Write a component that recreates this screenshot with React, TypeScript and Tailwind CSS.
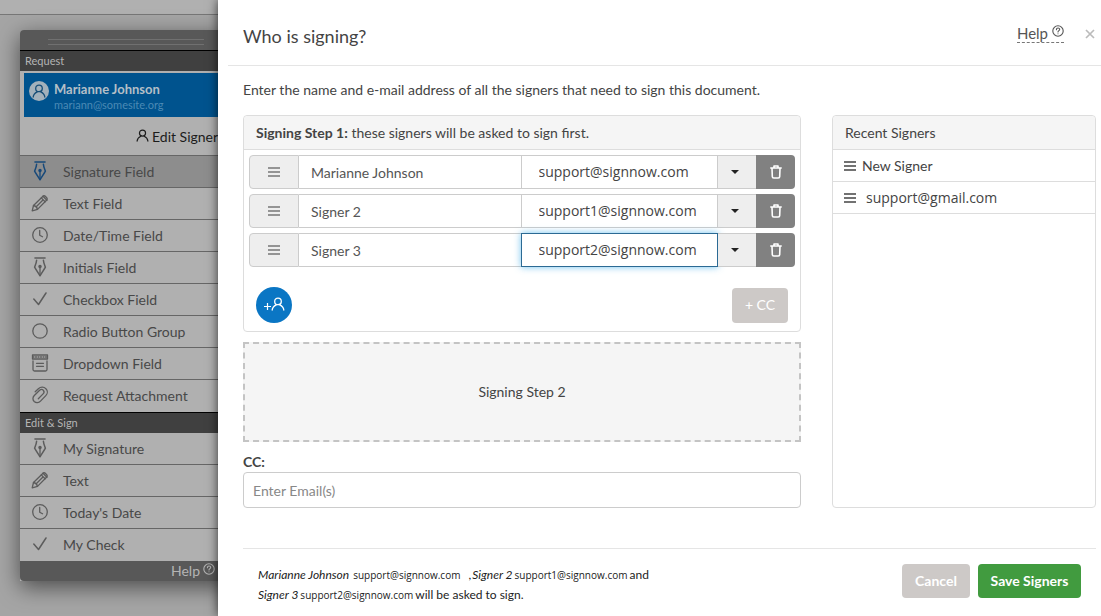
import React from "react";

type IconProps = { className?: string };

const stroke = {
  fill: "none",
  stroke: "currentColor",
  strokeWidth: 1.3,
  strokeLinecap: "round" as const,
  strokeLinejoin: "round" as const,
};

const PenIcon = ({ className = "" }: IconProps) => (
  <svg viewBox="0 0 18 20" className={`h-5 w-[18px] ${className}`} {...stroke} aria-hidden="true">
    <path d="M4 1h10" strokeWidth="1.600" />
    <path d="M5.600 3.200C5.400 5.800 4.400 8 3.600 10.200c1.300 2.400 3.200 5.200 5.400 8.600 2.200-3.400 4.100-6.200 5.400-8.600-.8-2.200-1.800-4.400-2-7" strokeWidth="1.500" />
    <path d="M9 10.500V18" />
    <circle cx="9" cy="9.500" r="1.100" fill="currentColor" />
  </svg>
);

const PencilIcon = () => (
  <svg viewBox="0 0 18 18" className="size-[18px]" {...stroke} aria-hidden="true">
    <path d="M1.200 16.800l1.300-5.300L12 2.200c1.500-1.500 5.300 2.200 3.800 3.800l-9.300 9.400z" />
    <path d="M2.500 11.500c1.700.2 3.500 2 4 3.900M10.300 3.900l3.800 3.900M12 2.300l3.900 3.900M11.700 6.300L5 13" />
  </svg>
);

const ClockIcon = () => (
  <svg viewBox="0 0 18 18" className="size-[18px]" {...stroke} aria-hidden="true">
    <circle cx="9" cy="9" r="7.300" />
    <path d="M8.700 4.500V9.200l2.800 1.600" />
  </svg>
);

const CheckIcon = () => (
  <svg viewBox="0 0 18 18" className="size-[18px]" {...stroke} aria-hidden="true">
    <path d="M2.800 9l4.700 5.500L15 3" strokeWidth="1.500" />
  </svg>
);

const CircleIcon = () => (
  <svg viewBox="0 0 18 18" className="size-[18px]" {...stroke} aria-hidden="true">
    <circle cx="9" cy="9" r="7.200" />
  </svg>
);

const DropdownIcon = () => (
  <svg viewBox="0 0 18 20" className="h-5 w-[18px]" {...stroke} aria-hidden="true">
    <path d="M1.500 2h15v4h-15zM2 8v8.500c0 1 .5 1.500 1.500 1.500h11c1 0 1.500-.5 1.500-1.500V8" />
    <path d="M2 4h14" strokeDasharray="1 1.500" />
    <path d="M5.500 10.300h7M5.500 13.300h7" />
  </svg>
);

const ClipIcon = () => (
  <svg viewBox="0 0 18 18" className="size-[18px]" {...stroke} aria-hidden="true">
    <path d="M4.200 5.800l3.200-3.100C9.700.6 13 .8 14.900 2.700c1.900 1.900 1.900 4.900-.1 6.900l-5.300 5.500c-1.700 1.700-4.500 2-6.300.4-1.800-1.700-1.600-4.300.1-6l5.300-5.200c1.100-1 2.700-1.100 3.700-.1 1 1.100.9 2.600-.2 3.700l-4.800 4.800" />
  </svg>
);

const PersonIcon = ({ className = "" }: IconProps) => (
  <svg viewBox="0 0 14 14" className={className} {...stroke} aria-hidden="true">
    <circle cx="7" cy="4.400" r="3.300" />
    <path d="M1.200 13c.2-2.600 1.900-4.200 4-5.200M12.800 13c-.2-2.600-1.900-4.200-4-5.200" />
  </svg>
);

const HelpIcon = () => (
  <svg viewBox="0 0 12 12" className="size-3" {...stroke} strokeWidth="1.100" aria-hidden="true">
    <circle cx="6" cy="6" r="5.200" />
    <path d="M4.400 4.700c0-2.200 3.300-2.100 3.300-.2C7.700 5.700 6 5.600 6 7M6 8.700v.1" />
  </svg>
);

const BarsIcon = () => (
  <svg viewBox="0 0 12 10" className="h-[10px] w-3 shrink-0" aria-hidden="true">
    <path d="M0 1h12M0 5h12M0 9h12" stroke="currentColor" strokeWidth="1.300" />
  </svg>
);

const TrashIcon = () => (
  <svg viewBox="0 0 12 14" className="h-[14px] w-3" {...stroke} strokeWidth="1.600" aria-hidden="true">
    <path d="M.8 3h10.400M4 2.800V1h4v1.800M2 3.200l.3 8.300c0 1 .6 1.500 1.500 1.500h4.400c.9 0 1.500-.5 1.500-1.500l.3-8.300" />
  </svg>
);

const requestItems = [
  { label: "Signature Field", icon: <PenIcon className="text-[#17497a]" />, active: true },
  { label: "Text Field", icon: <PencilIcon /> },
  { label: "Date/Time Field", icon: <ClockIcon /> },
  { label: "Initials Field", icon: <PenIcon /> },
  { label: "Checkbox Field", icon: <CheckIcon /> },
  { label: "Radio Button Group", icon: <CircleIcon /> },
  { label: "Dropdown Field", icon: <DropdownIcon /> },
  { label: "Request Attachment", icon: <ClipIcon /> },
];

const signItems = [
  { label: "My Signature", icon: <PenIcon /> },
  { label: "Text", icon: <PencilIcon /> },
  { label: "Today's Date", icon: <ClockIcon /> },
  { label: "My Check", icon: <CheckIcon /> },
];

const signers = [
  { name: "Marianne Johnson", email: "support@signnow.com" },
  { name: "Signer 2", email: "support1@signnow.com" },
  { name: "Signer 3", email: "support2@signnow.com", focused: true },
];

function ToolList({ items }: { items: { label: string; icon: React.ReactNode; active?: boolean }[] }) {
  return (
    <ul>
      {items.map((item) => (
        <li key={item.label} className="border-b border-[#666] last:border-transparent">
          <button
            type="button"
            className={`flex h-[31px] w-full items-center pl-[11px] text-left text-sm text-[#484848] ${item.active ? "bg-[#8d8d8d]" : ""}`}
          >
            <span className="flex w-8 items-center pb-[2px] text-[#5c5c5c]">{item.icon}</span>
            {item.label}
          </button>
        </li>
      ))}
    </ul>
  );
}

function Sidebar() {
  return (
    <aside className="ml-5 mt-[15px] w-[212px] rounded-t bg-[#b0b0b0] shadow-[0_6px_22px_rgba(0,0,0,0.55)]">
      <div className="flex h-5 flex-col items-center justify-center gap-1 rounded-t bg-[#585858] pt-1">
        <div className="h-px w-[156px] bg-[#707070]" />
        <div className="h-px w-[156px] bg-[#707070]" />
      </div>
      <h2 className="h-[21px] border-t border-black bg-[#404040] pl-[5px] text-[11px] leading-5 text-[#b4b4b4]">Request</h2>
      <div className="ml-1 mt-[2px] flex h-[44px] gap-[5px] bg-[#00538e] pl-[5px] pt-2">
        <span className="flex size-5 items-center justify-center rounded-full bg-[#a3b1bb] text-[#174e77]">
          <PersonIcon className="size-[14px]" />
        </span>
        <div>
          <div className="text-[13px] font-bold leading-4 text-[#b4bfc7]">Marianne Johnson</div>
          <div className="text-[11px] leading-4 text-[#4b8ab5]">mariann@somesite.org</div>
        </div>
      </div>
      <div className="border-b border-[#666] pl-[116px]">
        <button type="button" className="flex h-[38px] items-center gap-[3px] whitespace-nowrap pt-[2px] text-sm text-[#1c1c1c]">
          <PersonIcon className="mb-1 size-[13px]" />
          Edit Signer
        </button>
      </div>
      <ToolList items={requestItems} />
      <h2 className="h-[21px] border-t border-black bg-[#404040] pl-[5px] text-[11px] leading-5 text-[#b4b4b4]">Edit &amp; Sign</h2>
      <ToolList items={signItems} />
      <div className="flex h-5 justify-end rounded-b-sm bg-[#585858] pr-[17px]">
        <a href="#help" className="flex items-center gap-[3px] text-sm text-[#b4b4b4]">
          Help <span className="mb-1"><HelpIcon /></span>
        </a>
      </div>
    </aside>
  );
}

function SignerRow({ name, email, focused }: { name: string; email: string; focused?: boolean }) {
  return (
    <div className="flex h-[34px]">
      <button
        type="button"
        aria-label={`Reorder ${name}`}
        className="flex w-[50px] items-center justify-center rounded-l border border-[#ccc] bg-[#eee] text-[#777]"
      >
        <BarsIcon />
      </button>
      <input
        aria-label="Signer name"
        defaultValue={name}
        className="w-[223px] min-w-0 flex-[223] border-y border-[#ccc] bg-white px-3 pt-[2px] text-sm text-[#555] outline-none"
      />
      <input
        aria-label="Signer email"
        defaultValue={email}
        className={`w-[197px] min-w-0 flex-[197] border bg-white pl-[17px] pr-1 font-['Open_Sans',sans-serif] text-sm text-[#444] outline-none ${
          focused ? "border-[#2b6a94] shadow-[0_0_7px_rgba(80,180,235,0.8)]" : "border-[#ccc]"
        }`}
      />
      <button
        type="button"
        aria-label={`Options for ${name}`}
        className="flex w-[38px] items-center justify-center border-y border-[#ccc] bg-[#eee] pr-1 text-[#222]"
      >
        <svg viewBox="0 0 8 4" className="h-1 w-2" aria-hidden="true">
          <path d="M0 0h8L4 4z" fill="currentColor" />
        </svg>
      </button>
      <button
        type="button"
        aria-label={`Remove ${name}`}
        className="flex w-[39px] items-center justify-center rounded-r bg-[#818181] text-white"
      >
        <TrashIcon />
      </button>
    </div>
  );
}

const FooterEmail = ({ children }: { children: string }) => (
  <span className="mx-[2px] font-['Open_Sans',sans-serif] text-[10px]">{children}</span>
);

function SignersDialog() {
  return (
    <section
      role="dialog"
      aria-labelledby="dialog-title"
      className="absolute inset-y-0 left-[218px] right-0 flex flex-col bg-white text-sm text-[#444] shadow-[0_0_10px_rgba(0,0,0,0.7)]"
    >
      <header className="ml-[10px] flex h-[66px] items-center border-b border-[#e5e5e5] pl-[15px] pr-[6px]">
        <h1 id="dialog-title" className="flex-1 pt-[6px] text-lg">Who is signing?</h1>
        <a href="#help" className="mr-[21px] mt-[2px] flex items-center gap-1 border-b border-dashed border-[#777] text-[15px] leading-[17px] text-[#555]">
          Help <span className="mb-1"><HelpIcon /></span>
        </a>
        <button type="button" aria-label="Close" className="mt-[2px] text-[#bbb]">
          <svg viewBox="0 0 10 10" className="size-[10px]" aria-hidden="true">
            <path d="M1 1l8 8M9 1L1 9" stroke="currentColor" strokeWidth="1.700" />
          </svg>
        </button>
      </header>

      <div className="flex flex-1 flex-col pl-[25px] pr-[5px]">
        <p className="pt-[14px] leading-5">Enter the name and e-mail address of all the signers that need to sign this document.</p>
        <div className="mt-[15px] flex gap-[31px]">
          <div className="min-w-0 flex-1">
            <div className="rounded border border-[#ddd]">
              <h2 className="h-[34px] rounded-t border-b border-[#ddd] bg-[#f5f5f5] pl-3 leading-[34px]">
                <strong>Signing Step 1:</strong> these signers will be asked to sign first.
              </h2>
              <div className="flex flex-col gap-[5px] p-[5px]">
                {signers.map((s) => (
                  <SignerRow key={s.name} {...s} />
                ))}
              </div>
              <div className="flex items-center justify-between px-3 pb-2 pt-[15px]">
                <button
                  type="button"
                  aria-label="Add signer"
                  className="flex size-9 items-center justify-center rounded-full bg-[#0a76c4] pb-[2px] text-white"
                >
                  <svg viewBox="0 0 7 7" className="mt-1 size-[7px]" aria-hidden="true">
                    <path d="M3.500 0v7M0 3.500h7" stroke="currentColor" strokeWidth="1.200" />
                  </svg>
                  <PersonIcon className="size-[14px]" />
                </button>
                <button type="button" className="h-[35px] w-14 rounded bg-[#cdc9c7] text-sm text-white">+ CC</button>
              </div>
            </div>
            <div className="mt-[10px] flex h-[100px] items-center justify-center border-2 border-dashed border-[#c4c4c4] bg-[#f5f5f5]">
              Signing Step 2
            </div>
            <label htmlFor="cc" className="mt-[10px] block font-bold leading-5">CC:</label>
            <input
              id="cc"
              placeholder="Enter Email(s)"
              className="block h-9 w-full rounded border border-[#ccc] px-[9px] text-sm placeholder:text-[#888]"
            />
          </div>

          <aside className="w-[264px] rounded border border-[#ddd]">
            <h2 className="h-[34px] rounded-t border-b border-[#ddd] bg-[#f5f5f5] pl-3 leading-[34px]">Recent Signers</h2>
            <ul>
              <li className="flex h-8 items-center gap-[6px] border-b border-[#ddd] pl-[11px]">
                <BarsIcon /> New Signer
              </li>
              <li className="flex h-8 items-center gap-[10px] border-b border-[#ddd] pl-[11px] font-['Open_Sans',sans-serif]">
                <BarsIcon /> support@gmail.com
              </li>
            </ul>
          </aside>
        </div>
      </div>

      <footer className="ml-[25px] mr-[5px] flex h-[68px] items-start border-t border-[#e5e5e5] px-[15px] pt-[15px]">
        <p className="flex-1 pt-px text-xs leading-5 text-[#222]">
          <em className="mr-[2px]">Marianne Johnson</em>
          <FooterEmail>support@signnow.com</FooterEmail>
          <span className="ml-[6px] mr-px">,</span>
          <em>Signer 2</em>
          <FooterEmail>support1@signnow.com</FooterEmail>
          and
          <br />
          <em>Signer 3</em>
          <FooterEmail>support2@signnow.com</FooterEmail>
          will be asked to sign.
        </p>
        <div className="flex gap-2">
          <button type="button" className="h-[34px] w-[68px] rounded bg-[#cdc9c7] text-sm font-bold text-white">Cancel</button>
          <button type="button" className="h-[34px] w-[103px] rounded bg-[#419b3f] text-sm font-bold text-white">Save Signers</button>
        </div>
      </footer>
    </section>
  );
}

export default function App() {
  return (
    <main className="relative min-h-screen overflow-hidden bg-[#a5a5a5] pb-[35px] font-[Lato,sans-serif]">
      <div className="h-[15px] border-b border-[#777] bg-[#b0b0b0]" />
      <Sidebar />
      <SignersDialog />
    </main>
  );
}
